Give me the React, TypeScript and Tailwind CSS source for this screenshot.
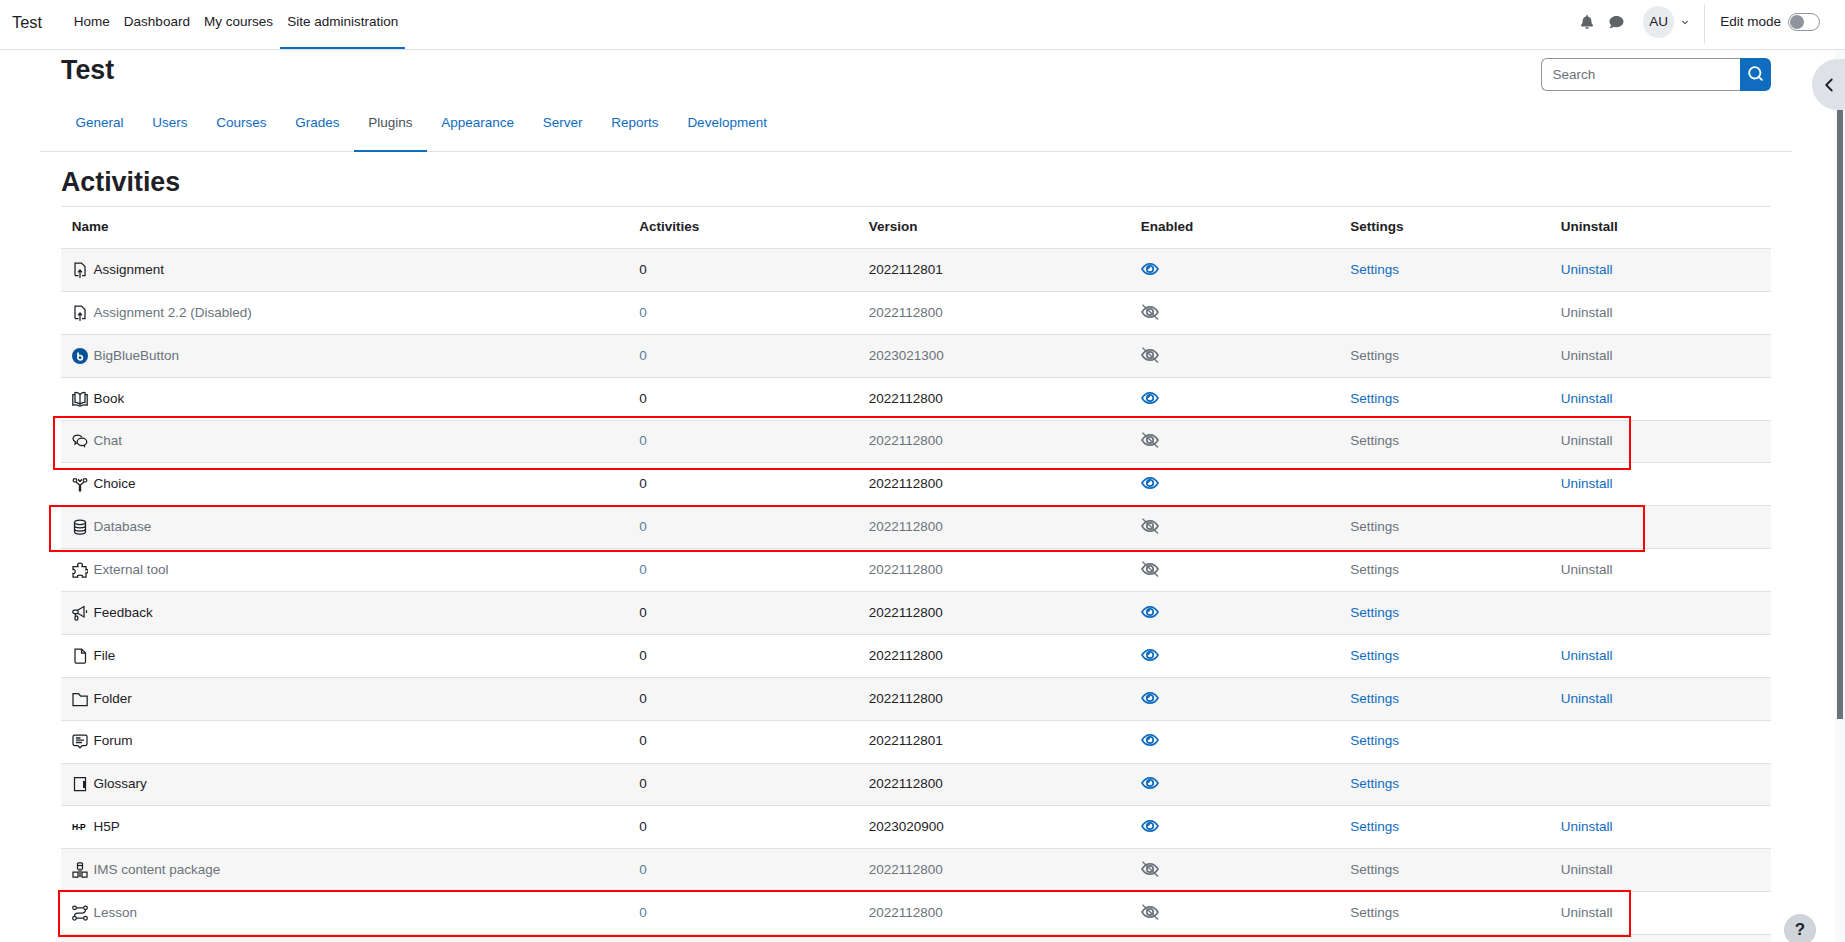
import React from "react";
import { FaBell, FaComment, FaChevronDown } from "react-icons/fa";
import { ChevronLeft, Search } from "lucide-react";

type RowData = {
  name: string;
  icon: string;
  on: boolean;
  version: string;
  settings: boolean;
  uninstall: boolean;
};

const rows: RowData[] = [
  { name: "Assignment", icon: "assign", on: true, version: "2022112801", settings: true, uninstall: true },
  { name: "Assignment 2.2 (Disabled)", icon: "assign", on: false, version: "2022112800", settings: false, uninstall: true },
  { name: "BigBlueButton", icon: "bbb", on: false, version: "2023021300", settings: true, uninstall: true },
  { name: "Book", icon: "book", on: true, version: "2022112800", settings: true, uninstall: true },
  { name: "Chat", icon: "chat", on: false, version: "2022112800", settings: true, uninstall: true },
  { name: "Choice", icon: "choice", on: true, version: "2022112800", settings: false, uninstall: true },
  { name: "Database", icon: "data", on: false, version: "2022112800", settings: true, uninstall: false },
  { name: "External tool", icon: "lti", on: false, version: "2022112800", settings: true, uninstall: true },
  { name: "Feedback", icon: "feedback", on: true, version: "2022112800", settings: true, uninstall: false },
  { name: "File", icon: "file", on: true, version: "2022112800", settings: true, uninstall: true },
  { name: "Folder", icon: "folder", on: true, version: "2022112800", settings: true, uninstall: true },
  { name: "Forum", icon: "forum", on: true, version: "2022112801", settings: true, uninstall: false },
  { name: "Glossary", icon: "glossary", on: true, version: "2022112800", settings: true, uninstall: false },
  { name: "H5P", icon: "h5p", on: true, version: "2023020900", settings: true, uninstall: true },
  { name: "IMS content package", icon: "ims", on: false, version: "2022112800", settings: true, uninstall: true },
  { name: "Lesson", icon: "lesson", on: false, version: "2022112800", settings: true, uninstall: true },
];

const tabs = ["General", "Users", "Courses", "Grades", "Plugins", "Appearance", "Server", "Reports", "Development"];
const navLinks = ["Home", "Dashboard", "My courses", "Site administration"];
const cols = "grid grid-cols-[567.5px_229.5px_272px_209.5px_210.5px_221px]";

const ModIcon = ({ type }: { type: string }) => {
  if (type === "h5p") {
    return <span className="w-[16px] text-[8.5px] leading-none font-black tracking-[-0.5px] text-black">H-P</span>;
  }
  const paths: Record<string, React.ReactNode> = {
    assign: (
      <>
        <path d="M3 13.5V1h6.500L13 4.500v9h-3" />
        <path d="M3 13.500h3.500M8 16V8M6 10.300 8 8l2 2.300" />
      </>
    ),
    bbb: (
      <>
        <circle cx="8" cy="8" r="8" fill="#0a5298" stroke="none" />
        <path d="M6 4.500v5.200a2.200 2.200 0 1 0 2.200-2.200H6" stroke="#fff" strokeWidth="1.700" />
      </>
    ),
    book: (
      <>
        <path d="M8 3.500C6.500 2 4.500 1.200 3 1.500V11.500c1.800-.2 3.500.4 5 1.800 1.500-1.400 3.200-2 5-1.800V1.500C11.500 1.200 9.500 2 8 3.500zM8 3.500v9.800" />
        <path d="M3 3.500H.8v10.700c2.500-.5 5-.1 7.200 1.100 2.200-1.200 4.700-1.600 7.200-1.100V3.500H13" />
      </>
    ),
    chat: (
      <>
        <path d="M5.500 9.500 3 11l.3-2.300C1.800 8 1 6.900 1 5.600 1 3.500 3.200 2 5.800 2c1.800 0 3.500.8 4.200 2.200" />
        <ellipse cx="10" cy="8.800" rx="4.800" ry="3.700" />
        <path d="M12 12l.8 2.200" />
      </>
    ),
    choice: (
      <>
        <path d="M8 15.500V9.500" strokeWidth="2.400" />
        <path d="M8 9.500 4.200 6M8 9.500 11.800 6M6 3.200 8 5.500l2-2.300" strokeWidth="1.300" />
        <circle cx="3" cy="4.300" r="1.800" />
        <circle cx="13" cy="4.300" r="1.800" />
      </>
    ),
    data: (
      <>
        <ellipse cx="8" cy="3.300" rx="5.500" ry="2.300" />
        <path d="M2.500 3.300v9.400c0 1.300 2.500 2.300 5.500 2.300s5.500-1 5.500-2.300V3.300M2.500 6.500c0 1.300 2.500 2.300 5.500 2.300s5.500-1 5.500-2.300M2.500 9.700c0 1.300 2.500 2.300 5.500 2.300s5.500-1 5.500-2.300" />
      </>
    ),
    lti: (
      <path d="M6 3.800C5 2.800 5.800 1 8 1s3 1.800 2 2.800V4.500h4v3.200c1-.8 2 0 2 1.500s-1 2.300-2 1.500V15h-3.700c.7-1.200-.3-2-2.300-2s-3 .8-2.300 2H1v-3.500C2.200 12 3.200 11 3.200 9.500S2.200 7 1 7.500V4.500h5z" />
    ),
    feedback: (
      <>
        <path d="M6 5 12 1.500v10.500L6 8.500z" />
        <path d="M6 5H2.500A1.700 1.700 0 0 0 .8 6.700v0a1.700 1.700 0 0 0 1.700 1.800H6M14.500 5.300v2.700" />
        <rect x="3" y="11" width="2.800" height="4" rx="1" />
        <path d="M2.800 8.500l1 2.500" />
      </>
    ),
    file: <path d="M3 1h6.500L13.500 5v9a1 1 0 0 1-1 1H4a1 1 0 0 1-1-1zM9.500 1v4h4" />,
    folder: <path d="M1 2.500h5.500l2 2.500H15.200v9.500H1z" />,
    forum: (
      <>
        <path d="M2.500 2h11A1.500 1.500 0 0 1 15 3.500v7.500a1.500 1.500 0 0 1-1.500 1.500H10.300L8 14.800 5.700 12.500H2.500A1.500 1.500 0 0 1 1 11V3.500A1.500 1.500 0 0 1 2.500 2z" />
        <path d="M4 5h4.500M4 7.200h8M4 9.500h6" strokeWidth="1.300" />
      </>
    ),
    glossary: (
      <>
        <path d="M2.500 1.500h11v13h-11z" />
        <path d="M12 5v7" strokeWidth="2" />
      </>
    ),
    ims: (
      <>
        <rect x="5.500" y="0.800" width="5" height="6.500" rx="1" />
        <path d="M5.500 3.500h5" />
        <path d="M1 15V10h5v5zM10 10h5v5h-5z" />
        <path d="M8 7.300V15" stroke="#666" strokeWidth="3.600" />
      </>
    ),
    lesson: (
      <>
        <circle cx="2.500" cy="2.800" r="1.800" />
        <circle cx="13.500" cy="2.800" r="1.800" />
        <circle cx="2.500" cy="13.200" r="1.800" />
        <circle cx="13.500" cy="13.200" r="1.800" />
        <path d="M4.300 2.800h7.400M13.500 4.600c0 2-1 3.400-3 3.400H5.500c-2 0-3 1.400-3 3.400M4.300 13.200h7.400" />
      </>
    ),
  };
  return (
    <svg viewBox="0 0 16 16" fill="none" stroke="#1d2125" strokeWidth="1.250" className="-ml-[0.5px] h-[16px] w-[16px] shrink-0">
      {paths[type]}
    </svg>
  );
};

const Eye = ({ on }: { on: boolean }) => (
  <svg
    viewBox="0 0 18 16"
    fill="none"
    stroke={on ? "#0f6cbf" : "#6a737b"}
    strokeWidth="1.700"
    className="-mt-[2px] h-[16px] w-[18px]"
  >
    <path d="M1 8c2-3.400 4.800-5.200 8-5.200S15 4.600 17 8c-2 3.400-4.800 5.200-8 5.200S3 11.400 1 8z" />
    <circle cx="9" cy="8" r="3.200" />
    {on && <path d="M9 6a2 2 0 0 0-2 2" strokeWidth="1.800" />}
    {!on && <path d="M1.500 .8 17 15.500" strokeWidth="1.400" />}
  </svg>
);

const Row = ({ row, index }: { row: RowData; index: number }) => {
  const text = row.on ? "text-[#1d2125]" : "text-[#6a737b]";
  const link = row.on ? "text-[#0f6cbf]" : "text-[#6a737b]";
  return (
    <div
      className={`${cols} h-[42.875px] items-center border-b border-[#dee2e6] ${index % 2 === 0 ? "bg-[#f6f6f6]" : "bg-white"} ${
        row.icon === "forum" ? "pb-[2px]" : ""
      }`}
    >
      <div className={`flex items-center pl-[11px] ${text}`}>
        <span className="flex w-[21.5px] shrink-0 items-center">
          <ModIcon type={row.icon} />
        </span>
        {row.name}
      </div>
      <div className={`pl-[10.7px] ${row.on ? "text-[#1d2125]" : "text-[#5a7d9a]"}`}>0</div>
      <div className={`pl-[10.7px] ${text}`}>{row.version}</div>
      <div className="flex pl-[10.7px]">
        <Eye on={row.on} />
      </div>
      <div className={`pl-[10.7px] ${link}`}>{row.settings ? "Settings" : ""}</div>
      <div className={`pl-[10.7px] ${link}`}>{row.uninstall ? "Uninstall" : ""}</div>
    </div>
  );
};

export default function App() {
  return (
    <div className="relative flex h-[942px] flex-col overflow-hidden bg-white font-['Liberation_Sans',Arial,sans-serif] text-[13.5px] leading-[20px] text-[#1d2125]">
      <header className="flex h-[50px] shrink-0 items-stretch border-b border-[#dee2e6] pl-[12px]">
        <div className="flex items-center pb-[5px] pr-[24.5px] text-[16.4px]">Test</div>
        {navLinks.map((l) => (
          <a
            key={l}
            className={`flex items-center border-b-2 px-[7.1px] pb-[3px] ${
              l === "Site administration" ? "border-[#0f6cbf]" : "border-transparent"
            }`}
          >
            {l}
          </a>
        ))}
        <div className="ml-auto flex items-center pb-[6px] pr-[25.5px]">
          <FaBell className="h-[14px] w-[14px] text-[#5f6368]" />
          <FaComment className="ml-[15px] h-[14px] w-[15px] text-[#5f6368]" />
          <div className="ml-[19px] mt-[1px] flex h-[32px] w-[31px] items-center justify-center rounded-full bg-[#e9ecef]">AU</div>
          <FaChevronDown className="ml-[7px] mt-[2px] h-[7px] w-[8px] text-[#4b5157]" />
          <div className="ml-[15px] mt-[4px] h-[40px] w-px bg-[#dee2e6]" />
          <span className="ml-[15px]">Edit mode</span>
          <div className="ml-[6.5px] flex h-[18px] w-[32px] items-center rounded-full border border-[#8f959e] bg-white pl-[1px]">
            <div className="h-[14px] w-[14px] rounded-full bg-[#8f959e]" />
          </div>
        </div>
      </header>

      <div className="flex min-h-0 flex-1">
        <main className="min-w-0 flex-1 pl-[40px] pr-[43px]">
          <div className="flex h-[63px] items-start justify-between pl-[21px] pr-[21px]">
            <h1 className="mt-[4px] text-[26.8px] font-bold leading-[32px]">Test</h1>
            <div className="mt-[8px] flex h-[33px] w-[230px]">
              <div className="flex flex-1 items-center rounded-l-[6px] border border-r-0 border-[#8f959e] pl-[10.5px] text-[#6a737b]">Search</div>
              <div className="flex w-[31px] items-center justify-center rounded-r-[6px] bg-[#0f6cbf] pb-[2px]">
                <Search className="h-[17px] w-[17px] text-white" strokeWidth={2.6} />
              </div>
            </div>
          </div>
          <nav className="flex h-[39px] border-b border-[#dee2e6] pl-[21px]">
            {tabs.map((t) => (
              <a
                key={t}
                className={`-mb-px h-[39px] border-b-2 px-[14.38px] ${
                  t === "Plugins" ? "border-[#0f6cbf] text-[#495057]" : "border-transparent text-[#0f6cbf]"
                }`}
              >
                {t}
              </a>
            ))}
          </nav>
          <div className="px-[21px]">
            <h2 className="mt-[14px] text-[26.8px] font-bold leading-[32px]">Activities</h2>
            <div className={`${cols} mt-[8px] h-[43px] items-center border-y border-[#dee2e6] pb-[2px] font-bold`}>
              {["Name", "Activities", "Version", "Enabled", "Settings", "Uninstall"].map((h) => (
                <div key={h} className="pl-[10.7px]">
                  {h}
                </div>
              ))}
            </div>
            {rows.map((r, i) => (
              <Row key={r.name} row={r} index={i} />
            ))}
            <div className="h-[43px] bg-[#f6f6f6]" />
          </div>
        </main>

        <div className="w-[10px] shrink-0 bg-[#f8f9fa] pl-[2px]">
          <div className="mt-[40px] h-[629px] w-[6px] bg-[#6a737b]" />
        </div>
      </div>

      {/* drawer toggle */}
      <div className="absolute right-0 top-[59px] flex h-[51px] w-[33px] items-center rounded-l-full bg-[#dee2e6] pl-[6px]">
        <ChevronLeft className="h-[22px] w-[22px] text-[#1d2125]" strokeWidth={2} />
      </div>

      {/* help button */}
      <div className="absolute left-[1784px] top-[914px] flex h-[32px] w-[32px] items-center justify-center rounded-full bg-[#ced4da] text-[17px] font-bold">
        ?
      </div>

      {/* red annotation boxes */}
      <div className="absolute left-[53px] top-[416px] h-[54px] w-[1578px] border-2 border-[#f00]" />
      <div className="absolute left-[49px] top-[505px] h-[47px] w-[1596px] border-2 border-[#f00]" />
      <div className="absolute left-[58px] top-[890px] h-[47px] w-[1573px] border-2 border-[#f00]" />
    </div>
  );
}
